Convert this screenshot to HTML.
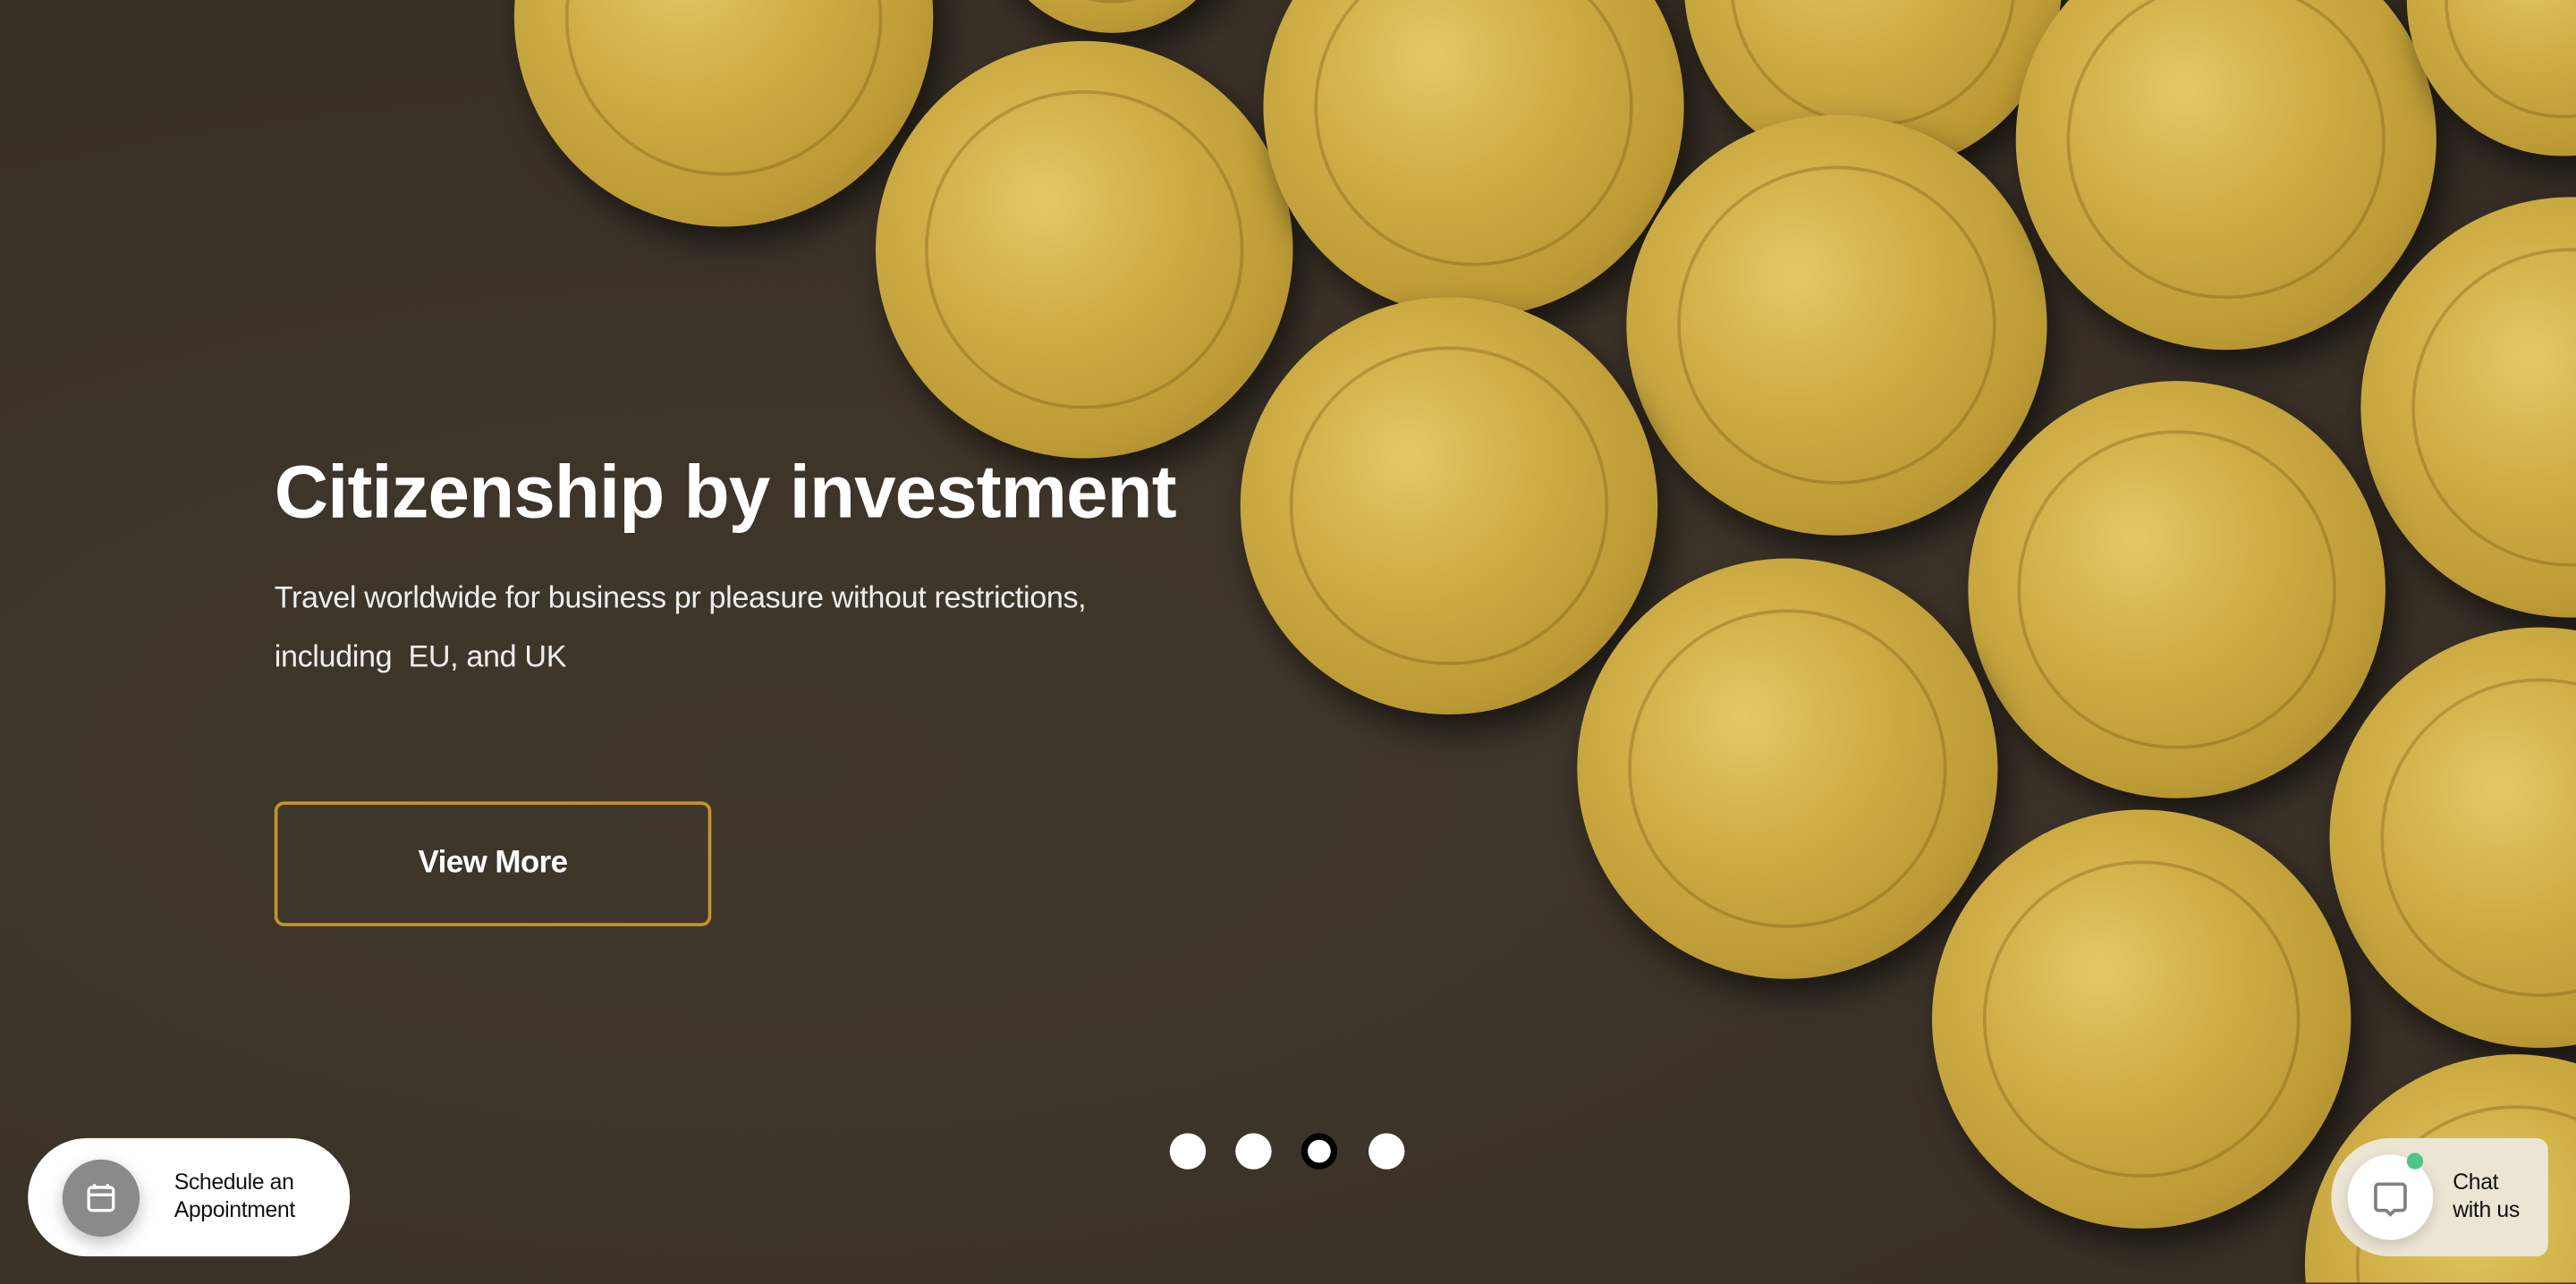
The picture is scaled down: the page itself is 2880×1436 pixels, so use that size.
<!DOCTYPE html>
<html><head><meta charset="utf-8"><style>
html,body{margin:0;padding:0;width:2880px;height:1436px;overflow:hidden;background:#3a3128}
#s{position:absolute;left:0;top:0;width:1568px;height:781px;transform:scale(1.83674);transform-origin:0 0;overflow:hidden;
background:radial-gradient(ellipse at 30% 60%,#40372c 0%,#3a3128 60%,#342c23 100%);font-family:"Liberation Sans",sans-serif}
.c{position:absolute;border-radius:50%;
background:radial-gradient(circle at 40% 38%,#e4c964 0%,#cfae45 35%,#bb9a34 70%,#a3822a 88%,#d2b555 92%,#86671d 100%);
box-shadow:6px 10px 18px rgba(0,0,0,.55)}
.c::after{content:"";position:absolute;inset:12%;border-radius:50%;border:2px solid rgba(120,90,20,.35)}
h1{position:absolute;left:167px;top:274px;margin:0;color:#fff;font-size:45.5px;font-weight:bold;letter-spacing:-.5px;white-space:nowrap}
p{position:absolute;left:167px;top:346px;margin:0;color:#eee;font-size:18.6px;line-height:36px;width:640px;letter-spacing:-.2px}
.btn{position:absolute;left:167px;top:488px;width:262px;height:72px;border:2px solid #c49525;border-radius:6px;color:#fff;font-weight:bold;font-size:19px;display:flex;align-items:center;justify-content:center;letter-spacing:-.3px}
.dot{position:absolute;top:690px;width:22px;height:22px;border-radius:50%;background:#fff}
.sch{position:absolute;left:17px;top:693px;width:196px;height:72px;border-radius:36px;background:#fff}
.sch .ci{position:absolute;left:21px;top:13px;width:47px;height:47px;border-radius:50%;background:#8a8a8a;box-shadow:0 4px 10px rgba(0,0,0,.25)}
.t{position:absolute;font-size:13.5px;line-height:16.5px;color:#111;letter-spacing:-.2px}
.chat{position:absolute;left:1419px;top:693px;width:132px;height:72px;border-radius:36px 7px 7px 36px;background:#ece5d3}
.chat .ci{position:absolute;left:10px;top:10px;width:52px;height:52px;border-radius:50%;background:#fff;box-shadow:0 3px 8px rgba(0,0,0,.15)}
</style></head><body><div id="s">
<div class="c" style="left:313px;top:-117px;width:255px;height:255px"></div>
<div class="c" style="left:602px;top:-130px;width:150px;height:150px"></div>
<div class="c" style="left:533px;top:25px;width:254px;height:254px"></div>
<div class="c" style="left:769px;top:-63px;width:256px;height:256px"></div>
<div class="c" style="left:1025px;top:-125px;width:230px;height:230px"></div>
<div class="c" style="left:990px;top:70px;width:256px;height:256px"></div>
<div class="c" style="left:1227px;top:-43px;width:256px;height:256px"></div>
<div class="c" style="left:1465px;top:-95px;width:190px;height:190px"></div>
<div class="c" style="left:1437px;top:120px;width:256px;height:256px"></div>
<div class="c" style="left:755px;top:181px;width:254px;height:254px"></div>
<div class="c" style="left:1198px;top:232px;width:254px;height:254px"></div>
<div class="c" style="left:960px;top:340px;width:256px;height:256px"></div>
<div class="c" style="left:1418px;top:382px;width:256px;height:256px"></div>
<div class="c" style="left:1176px;top:493px;width:255px;height:255px"></div>
<div class="c" style="left:1403px;top:642px;width:256px;height:256px"></div>

<h1>Citizenship by investment</h1>
<p>Travel worldwide for business pr pleasure without restrictions,<br>including&nbsp; EU, and UK</p>
<div class="btn">View More</div>

<div class="dot" style="left:712px"></div>
<div class="dot" style="left:752px"></div>
<div class="dot" style="left:792px;width:14px;height:14px;border:4px solid #000"></div>
<div class="dot" style="left:833px"></div>

<div class="sch"><div class="ci"><svg width="47" height="47" viewBox="0 0 47 47"><rect x="16" y="17" width="15" height="14" rx="2" fill="none" stroke="#fff" stroke-width="1.8"/><line x1="16" y1="21.5" x2="31" y2="21.5" stroke="#fff" stroke-width="1.8"/><line x1="19.5" y1="15" x2="19.5" y2="18" stroke="#fff" stroke-width="1.8"/><line x1="27.5" y1="15" x2="27.5" y2="18" stroke="#fff" stroke-width="1.8"/></svg></div>
<div class="t" style="left:89px;top:19px">Schedule an<br>Appointment</div></div>

<div class="chat"><div class="ci"><svg width="52" height="52" viewBox="0 0 52 52"><path d="M17 20a2 2 0 0 1 2-2h14a2 2 0 0 1 2 2v12a2 2 0 0 1-2 2h-4.5l-2.5 2.5-2.5-2.5H19a2 2 0 0 1-2-2z" fill="none" stroke="#808080" stroke-width="2"/></svg></div>
<div style="position:absolute;left:46px;top:9px;width:10px;height:10px;border-radius:50%;background:#4fc38a"></div>
<div class="t" style="left:74px;top:19px">Chat<br>with us</div></div>
</div></body></html>
